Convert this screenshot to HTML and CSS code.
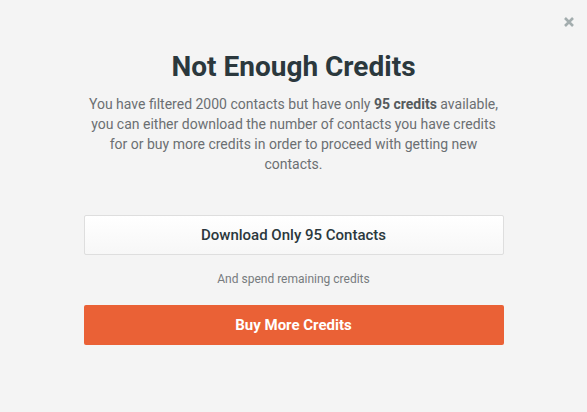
FILE: index.html
```html
<!DOCTYPE html>
<html lang="en">
<head>
  <meta charset="UTF-8">
  <meta name="viewport" content="width=device-width, initial-scale=1.0">
  <title>Not Enough Credits</title>
  <link rel="stylesheet" href="styles.css">
</head>
<body>

  <!-- modal -->
  <div class="modal">
    <button class="close_btn" aria-label="Close">
      <svg width="12" height="12" viewBox="0 0 12 12">
        <path d="M2 2 L10 10 M10 2 L2 10" stroke="currentColor" stroke-width="2.6" stroke-linecap="butt"/>
      </svg>
    </button>

    <div class="modal_body">
      <h1 class="title">Not Enough Credits</h1>
      <p class="desc">You have filtered 2000 contacts but have only <b>95 credits</b> available, you can either download the number of contacts you have credits for or buy more credits in order to proceed with getting new contacts.</p>

      <div class="actions">
        <button class="btn btn_light">Download Only 95 Contacts</button>
        <p class="hint">And spend remaining credits</p>
        <button class="btn btn_orange">Buy More Credits</button>
      </div>
    </div>
  </div>

</body>
</html>
```

FILE: styles.css
```css
:root {
    --en-font: Roboto, "Liberation Sans", Arial, sans-serif;
    --dark: #2b383d;
    --grey: #6b6f72;
    --orange: #ea6136;
}

html, body {margin: 0; padding: 0;}
body {font-family: var(--en-font); background: #f4f4f4; color: var(--dark);}

/* modal */
.modal {position: relative; width: 587px; height: 412px;}
.modal_body {width: 420px; margin: 0 auto; padding-top: 48px; text-align: center;}

.close_btn {position: absolute; top: 16px; right: 12px; width: 12px; height: 12px; padding: 0; border: 0; background: none; color: #a3adae; cursor: pointer; display: flex;}

.title {margin: 0; font-size: 28px; line-height: 38px; font-weight: 700; color: var(--dark);}
.desc {margin: 8px 0 0; font-size: 14px; line-height: 20px; color: var(--grey);}
.desc b {font-weight: 700; color: #555a5d;}

/* buttons */
.actions {margin-top: 41px; display: flex; flex-direction: column;}
.btn {width: 100%; height: 40px; border-radius: 2px; font-family: var(--en-font); font-size: 15px; cursor: pointer;}
.btn_light {border: 1px solid #dedede; background: linear-gradient(#ffffff, #f7f7f7); color: var(--dark); font-weight: 500;}
.btn_orange {border: 0; background: var(--orange); color: #fff; font-weight: 700;}
.hint {margin: 0; padding: 15px 0 17px; font-size: 12px; line-height: 18px; color: #777b7e;}
```
